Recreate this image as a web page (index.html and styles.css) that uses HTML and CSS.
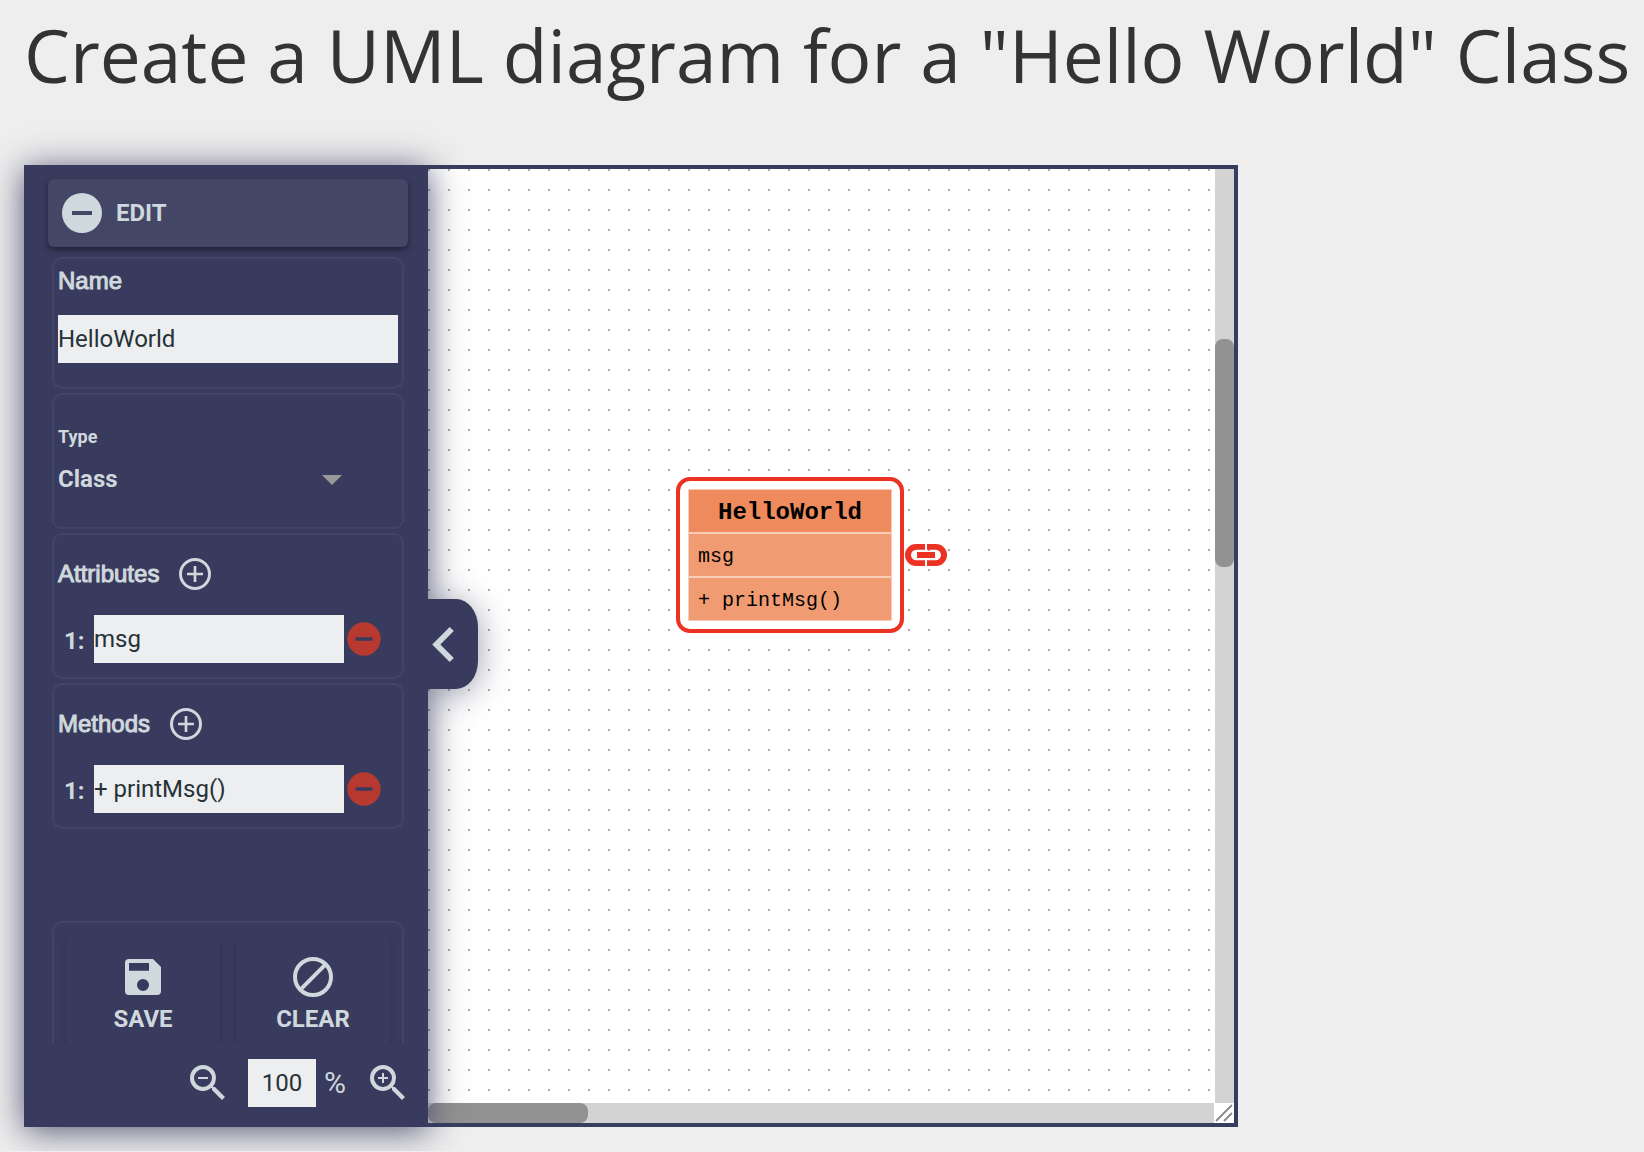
FILE: index.html
```html
<!DOCTYPE html>
<html lang="en">
<head>
<meta charset="utf-8">
<title>UML diagram editor</title>
<link rel="stylesheet" href="styles.css">
</head>
<body>
<h1 class="title">Create a UML diagram for a "Hello World" Class</h1>
<main class="editor">
  <aside class="sidebar">
    <form class="panel">
      <button type="button" class="edit-btn">
        <svg class="icon-lg" viewBox="0 0 24 24"><path fill-rule="evenodd" d="M12 2a10 10 0 1 0 0 20a10 10 0 0 0 0-20zM7 11h10v2H7z"/></svg>
        EDIT
      </button>
      <section class="card card-name">
        <label class="heading" for="name">Name</label>
        <input class="field" id="name" type="text" value="HelloWorld">
      </section>
      <section class="card card-type">
        <label class="small-label" for="type">Type</label>
        <div class="select-wrap">
          <select class="select" id="type"><option>Class</option><option>Interface</option></select>
        </div>
      </section>
      <section class="card card-list">
        <div class="list-head">
          <span class="heading">Attributes</span>
          <button type="button" class="icon-btn" aria-label="Add attribute"><svg class="icon" viewBox="0 0 24 24"><path fill-rule="evenodd" d="M12 2.400a9.600 9.600 0 1 0 0 19.200a9.600 9.600 0 0 0 0-19.200zm0 1.800a7.800 7.800 0 1 1 0 15.600a7.800 7.800 0 0 1 0-15.600zM11.200 7.200h1.600v4h4v1.600h-4v4h-1.600v-4h-4v-1.600h4z"/></svg></button>
        </div>
        <div class="list-row">
          <label class="index" for="attr1">1:</label>
          <input class="field" id="attr1" type="text" value="msg">
          <button type="button" class="icon-btn remove" aria-label="Remove attribute"><svg class="icon" viewBox="0 0 24 24"><path fill-rule="evenodd" d="M12 2a10 10 0 1 0 0 20a10 10 0 0 0 0-20zM7 11h10v2H7z"/></svg></button>
        </div>
      </section>
      <section class="card card-list">
        <div class="list-head">
          <span class="heading">Methods</span>
          <button type="button" class="icon-btn" aria-label="Add method"><svg class="icon" viewBox="0 0 24 24"><path fill-rule="evenodd" d="M12 2.400a9.600 9.600 0 1 0 0 19.200a9.600 9.600 0 0 0 0-19.200zm0 1.800a7.800 7.800 0 1 1 0 15.600a7.800 7.800 0 0 1 0-15.600zM11.200 7.200h1.600v4h4v1.600h-4v4h-1.600v-4h-4v-1.600h4z"/></svg></button>
        </div>
        <div class="list-row">
          <label class="index" for="method1">1:</label>
          <input class="field" id="method1" type="text" value="+ printMsg()">
          <button type="button" class="icon-btn remove" aria-label="Remove method"><svg class="icon" viewBox="0 0 24 24"><path fill-rule="evenodd" d="M12 2a10 10 0 1 0 0 20a10 10 0 0 0 0-20zM7 11h10v2H7z"/></svg></button>
        </div>
      </section>
      <section class="card card-actions">
        <button type="button" class="action">
          <svg class="icon-lg" viewBox="0 0 24 24"><path fill-rule="evenodd" d="M15 8.900H5V5h10zM12 19a3 3 0 0 1 0-6a3 3 0 0 1 0 6zM17 3H5a2 2 0 0 0-2 2v14a2 2 0 0 0 2 2h14a2 2 0 0 0 2-2V7z"/></svg>
          SAVE
        </button>
        <button type="button" class="action">
          <svg class="icon-lg" viewBox="0 0 24 24"><g fill="none" stroke="currentColor" stroke-width="2"><circle cx="12" cy="12" r="9"/><path d="M5.700 18.300L18.300 5.700"/></g></svg>
          CLEAR
        </button>
      </section>
    </form>
    <div class="zoom">
      <button type="button" class="icon-btn" aria-label="Zoom out"><svg class="icon-lg" viewBox="0 0 24 24"><path d="M15.500 14h-.790l-.280-.270A6.470 6.470 0 0 0 16 9.500A6.500 6.500 0 1 0 9.500 16c1.610 0 3.090-.590 4.230-1.570l.270.280v.790l5 4.990L20.490 19zM9.500 14a4.500 4.500 0 1 1 0-9a4.500 4.500 0 0 1 0 9zM7 9h5v1H7z"/></svg></button>
      <input class="field zoom-field" type="text" value="100" aria-label="Zoom percentage">
      <span class="percent">%</span>
      <button type="button" class="icon-btn" aria-label="Zoom in"><svg class="icon-lg" viewBox="0 0 24 24"><path d="M15.500 14h-.790l-.280-.270A6.470 6.470 0 0 0 16 9.500A6.500 6.500 0 1 0 9.500 16c1.610 0 3.090-.590 4.230-1.570l.270.280v.790l5 4.990L20.490 19zM9.500 14a4.500 4.500 0 1 1 0-9a4.500 4.500 0 0 1 0 9zM7 9h2V7h1v2h2v1h-2v2H9v-2H7z"/></svg></button>
    </div>
    <button type="button" class="collapse" aria-label="Collapse sidebar"><svg class="chevron" viewBox="8 6 7.400 12"><path d="M15.400 16.600L10.800 12l4.600-4.600L14 6l-6 6l6 6z"/></svg></button>
  </aside>
  <div class="viewport">
    <div class="canvas">
      <div class="node">
        <div class="node-title">HelloWorld</div>
        <div class="node-row">msg</div>
        <div class="node-row">+ printMsg()</div>
      </div>
      <svg class="link" viewBox="0 0 126 66"><path fill="#ec3323" fill-rule="evenodd" d="M60 0H33a33 33 0 0 0 0 66H60V49H34a16 16 0 0 1 0-32H60zM66 0H93a33 33 0 0 1 0 66H66V49H92a16 16 0 0 0 0-32H66zM36 24H90V42H36z"/></svg>
    </div>
    <div class="track-v"><div class="thumb-v"></div></div>
    <div class="track-h"><div class="thumb-h"></div></div>
    <svg class="resizer" viewBox="0 0 20 20"><path d="M2 18L18 2M10 18L18 10" stroke="#8c8c8c" stroke-width="2"/></svg>
  </div>
</main>
</body>
</html>
```
FILE: styles.css
```css
* { box-sizing: border-box; }
body {
  margin: 0;
  padding: 5px 24px 24px;
  background: #eee;
  font-family: Roboto, "Liberation Sans", sans-serif;
  font-size: 24px;
  line-height: 28px;
}
button, input, select {
  font: inherit;
  color: inherit;
  margin: 0;
  padding: 0;
  border: 0;
  border-radius: 0;
  background: none;
}
svg { display: block; flex: none; fill: currentColor; }
.title {
  margin: 0 0 60px;
  font: 400 73px/100px "Open Sans", sans-serif;
  color: #333;
  white-space: nowrap;
}
.editor {
  display: flex;
  height: calc(100vh - 190px);
  margin-right: 382px;
}

/* Sidebar */
.sidebar {
  position: relative;
  z-index: 1;
  flex: none;
  width: 404px;
  display: flex;
  flex-direction: column;
  background: #393b5e;
  color: #cfd8dc;
  box-shadow: 0 4px 32px rgba(57, 59, 94, .85);
}
.panel {
  flex: 1;
  min-height: 0;
  overflow: hidden;
  display: flex;
  flex-direction: column;
  gap: 4px;
  padding: 14px 20px 0 24px;
}
.edit-btn {
  flex: none;
  display: flex;
  align-items: center;
  gap: 10px;
  height: 68px;
  margin-bottom: 6px;
  padding: 0 10px;
  border-radius: 6px;
  background: #444665;
  font-weight: 700;
  box-shadow: 0 3px 6px rgba(0, 0, 0, .45);
}
.icon-lg { width: 48px; height: 48px; }
.icon { width: 40px; height: 40px; }
.card {
  flex: none;
  display: flex;
  flex-direction: column;
  margin: 0 4px;
  padding: 0 4px;
  border: 2px solid #424466;
  border-radius: 10px;
}
.card-name { gap: 20px; padding-top: 8px; padding-bottom: 24px; }
.card-type { gap: 7px; padding-top: 31px; padding-bottom: 24px; }
.card-list { gap: 21px; padding-top: 19px; padding-bottom: 14px; }
.heading {
  font-family: "Liberation Sans", sans-serif;
  -webkit-text-stroke: 1px currentColor;
}
.field {
  flex: none;
  height: 48px;
  background: #edeef0;
  color: #263238;
}
.small-label { font-size: 18px; line-height: 22px; font-weight: 700; }
.select-wrap { position: relative; margin-right: 56px; }
.select {
  appearance: none;
  width: 100%;
  height: 48px;
  font-weight: 700;
}
.select-wrap::after {
  content: "";
  position: absolute;
  right: 0;
  top: 20px;
  border: 10px solid transparent;
  border-top-color: #999;
  border-bottom: 0;
  pointer-events: none;
}
.list-head { display: flex; align-items: center; gap: 16px; }
.list-row { display: flex; align-items: center; margin-right: 14px; }
.list-row .field { flex: 1; min-width: 0; }
.index { flex: 0 0 36px; padding-top: 4px; padding-left: 6px; font-weight: 700; }
.remove { color: #b73930; }
.card-actions {
  flex-direction: row;
  gap: 16px;
  margin-top: 88px;
  padding: 12px;
}
.action {
  flex: 1 1 0;
  min-width: 0;
  display: flex;
  flex-direction: column;
  align-items: center;
  gap: 4px;
  padding: 18px 0;
  border-radius: 6px;
  font-weight: 700;
  box-shadow: 0 5px 6px rgba(0, 0, 0, .2);
}
.zoom {
  display: flex;
  align-items: center;
  justify-content: flex-end;
  padding: 16px 16px 20px;
}
.zoom-field { width: 68px; margin-left: 16px; text-align: center; }
.percent { width: 48px; padding-left: 8px; font-size: 30px; }
.collapse {
  position: absolute;
  left: 100%;
  top: 434px;
  width: 50px;
  height: 90px;
  padding-left: 4px;
  border-radius: 0 22px 22px 0 / 0 28px 28px 0;
  background: #393b5e;
  box-shadow: 0 4px 32px rgba(57, 59, 94, .5);
  clip-path: inset(-40px -40px -40px 0);
}
.chevron { width: 22px; height: 35px; }

/* Drawing area */
.viewport {
  flex: 1;
  min-width: 0;
  display: grid;
  grid-template: 1fr 20px / 1fr 20px;
  border: solid #363d5e;
  border-width: 4px 4px 4px 0;
  background: #fff;
}
.canvas {
  position: relative;
  overflow: hidden;
  background: conic-gradient(from 270deg at 2px 2px, #a9a9a9 90deg, transparent 0) 0 0 / 20px 20px;
}
.node {
  position: absolute;
  left: 248px;
  top: 308px;
  width: 228px;
  padding: 8px;
  border: 4px solid #ec3323;
  border-radius: 14px;
  background: #fff;
  font-family: "Liberation Mono", "Liberation Sans", monospace;
  color: #000;
}
.node-title, .node-row {
  height: 44px;
  border: 1px solid #f7cdb8;
  line-height: 46px;
}
.node-title { background: #ef8a5c; text-align: center; font-weight: 700; }
.node-row { padding-left: 9px; background: #f09b72; font-size: 20px; }
.link { position: absolute; left: 477px; top: 375px; width: 42px; height: 22px; }
.track-v { display: flow-root; margin-left: 1px; background: #d3d3d3; }
.track-h { background: #d3d3d3; }
.thumb-v { height: 228px; margin-top: 170px; border-radius: 8px; background: #929292; }
.thumb-h { width: 160px; height: 20px; border-radius: 8px; background: #929292; }
.resizer { width: 20px; height: 20px; }
```
